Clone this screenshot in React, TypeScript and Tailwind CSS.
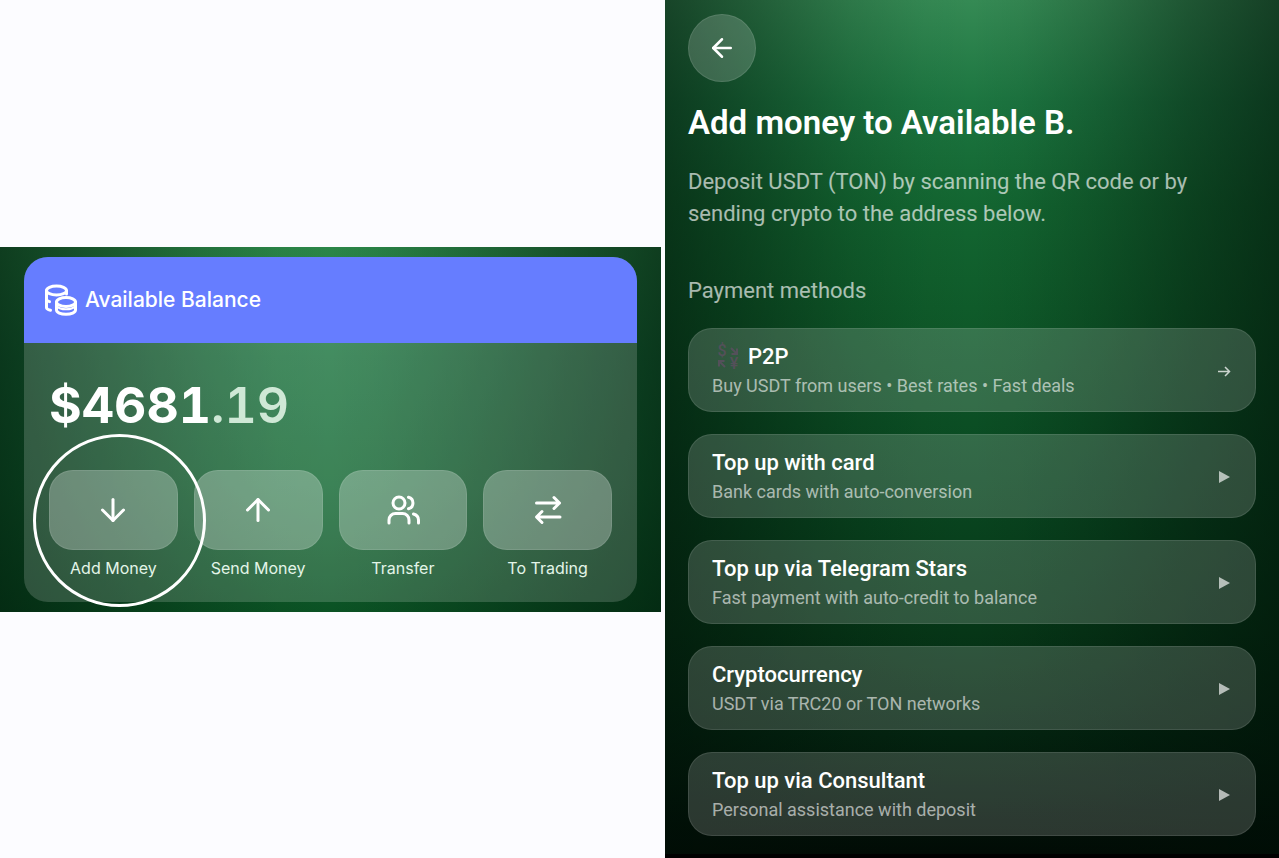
import type { ReactNode } from "react";
import { ArrowDown, ArrowLeft, ArrowUp } from "lucide-react";

interface IPaymentMethod {
  readonly title: string;
  readonly description: string;
  readonly isP2P?: boolean;
}

interface IQuickActionProps {
  readonly label: string;
  readonly children: ReactNode;
}

const PAYMENT_METHODS: IPaymentMethod[] = [
  {
    title: "P2P",
    description: "Buy USDT from users • Best rates • Fast deals",
    isP2P: true,
  },
  { title: "Top up with card", description: "Bank cards with auto-conversion" },
  {
    title: "Top up via Telegram Stars",
    description: "Fast payment with auto-credit to balance",
  },
  { title: "Cryptocurrency", description: "USDT via TRC20 or TON networks" },
  {
    title: "Top up via Consultant",
    description: "Personal assistance with deposit",
  },
];

function CoinsIcon() {
  return (
    <svg
      className="size-8 shrink-0"
      viewBox="0 0 32 32"
      fill="none"
      stroke="currentColor"
      strokeWidth="3"
      strokeLinecap="round"
      strokeLinejoin="round"
      aria-hidden="true"
    >
      <ellipse cx="11.5" cy="6.5" rx="10" ry="4.500" />
      <path d="M1.5 6.5v17c0 1.400 1.500 2.200 4 2.700" />
      <path d="M1.500 15c0 1.500 1.300 2.200 3 2.600M21.500 7v3" />
      <ellipse cx="21" cy="18" rx="9.500" ry="4.500" />
      <path d="M11.500 18v8c0 2.400 4.200 4.300 9.500 4.300s9.500-1.900 9.500-4.300v-8" />
      <path d="M12 22.500c1.600 1.800 5 2.800 9 2.800s7.400-1 9-2.800" strokeWidth="2" />
    </svg>
  );
}

function UsersIcon() {
  return (
    <svg
      className="h-8 w-9"
      viewBox="0 0 36 32"
      fill="none"
      stroke="currentColor"
      strokeWidth="3"
      strokeLinecap="round"
      aria-hidden="true"
    >
      <circle cx="14" cy="9" r="6" />
      <path d="M4 29v-3a6.500 6.500 0 0 1 6.500-6.500h7a6.500 6.500 0 0 1 6.500 6.500v3" />
      <path d="M23.500 3.200a6 6 0 0 1 0 11.600M28.500 20c3 .8 5 3 5 6v3" />
    </svg>
  );
}

function SwapIcon() {
  return (
    <svg
      className="h-8 w-8"
      viewBox="0 0 32 32"
      fill="none"
      stroke="currentColor"
      strokeWidth="3"
      strokeLinecap="round"
      strokeLinejoin="round"
      aria-hidden="true"
    >
      <path d="M4.500 9h23M22 3.500 27.500 9 22 14.500" />
      <path d="M28 23H5M10 17.500 4.500 23l5.500 5.500" />
    </svg>
  );
}

function ExchangeIcon() {
  return (
    <span
      className="grid w-7 grid-cols-2 place-items-center pl-1 text-base leading-[13px] font-medium text-[#54505a]"
      aria-hidden="true"
    >
      <span>$</span>
      <svg className="size-2" viewBox="0 0 8 8" fill="none" stroke="currentColor" strokeWidth="2">
        <path d="m1 1 5 5M7 1.500V7H1.500" />
      </svg>
      <svg className="size-2" viewBox="0 0 8 8" fill="none" stroke="currentColor" strokeWidth="2">
        <path d="M7 7 2 2M1 6.500V1h5.500" />
      </svg>
      <span>¥</span>
    </span>
  );
}

function QuickAction({ label, children }: IQuickActionProps) {
  return (
    <button type="button" className="flex min-w-0 flex-1 flex-col items-center gap-2">
      <span className="flex h-20 w-full items-center justify-center rounded-3xl border border-white/10 bg-white/28 text-white">
        {children}
      </span>
      <span className="text-base leading-5 whitespace-nowrap text-[#e3f5e8]">
        {label}
      </span>
    </button>
  );
}

function BalancePanel() {
  return (
    <section className="w-full bg-[linear-gradient(90deg,rgba(0,24,10,0.66),rgba(0,24,10,0.44)_15%,rgba(0,24,10,0.2)_30%,rgba(0,24,10,0.04)_42%,rgba(0,24,10,0)_50%,rgba(0,24,10,0.06)_57%,rgba(0,24,10,0.24)_70%,rgba(0,24,10,0.46)_85%,rgba(0,24,10,0.66)),linear-gradient(180deg,#2b8648,#1d7540_30%,#156a35_65%,#0b5224)] px-6 pt-[10px] pb-[10px]">
      <div className="relative rounded-3xl bg-white/17">
        <header className="flex h-[86px] items-center gap-2 rounded-t-3xl bg-[#667dff] px-[21px] text-white">
          <CoinsIcon />
          <h2 className="text-[21px] leading-7 font-medium">
            Available Balance
          </h2>
        </header>
        <div className="px-[25px] pt-8 pb-6">
          <p className="text-[50px] leading-[60px] font-bold text-white tabular-nums">
            $4681<span className="font-semibold text-[#cfe8d6]">.19</span>
          </p>
          <div className="flex gap-4 pt-[35px]">
            <QuickAction label="Add Money">
              <ArrowDown size={36} strokeWidth={2} />
            </QuickAction>
            <QuickAction label="Send Money">
              <ArrowUp size={36} strokeWidth={2} />
            </QuickAction>
            <QuickAction label="Transfer">
              <UsersIcon />
            </QuickAction>
            <QuickAction label="To Trading">
              <SwapIcon />
            </QuickAction>
          </div>
        </div>
        {/* highlight ring around the first action */}
        <span className="pointer-events-none absolute top-[177px] left-[9px] size-[173px] rounded-full border-3 border-white" />
      </div>
    </section>
  );
}

function PaymentMethod({ title, description, isP2P }: IPaymentMethod) {
  return (
    <li>
      <button
        type="button"
        className="flex w-full items-center justify-between rounded-3xl border border-white/10 bg-white/17 pt-[13px] pr-6 pb-[11px] pl-[23px] text-left"
      >
        <span className="flex flex-col">
          <span className="flex items-center gap-2 text-[22px] leading-[30px] font-medium text-white">
            {isP2P && <ExchangeIcon />}
            {title}
          </span>
          <span className="text-lg leading-7 text-white/60">
            {description}
          </span>
        </span>
        {isP2P ? (
          <svg
            className="h-3 w-[14px] text-white/75"
            viewBox="0 0 14 12"
            fill="none"
            stroke="currentColor"
            strokeWidth="1.500"
            aria-hidden="true"
          >
            <path d="M1 6.500h11.500M8 2l4.500 4.500L8 11" />
          </svg>
        ) : (
          <svg className="h-3 w-[14px] text-white/65" viewBox="0 0 14 12" aria-hidden="true">
            <path d="M2 0v12l11-6Z" fill="currentColor" />
          </svg>
        )}
      </button>
    </li>
  );
}

function AddMoneyPanel() {
  return (
    <section className="min-w-0 border-b-4 border-black bg-[linear-gradient(90deg,rgba(0,14,6,0.56),rgba(0,14,6,0.36)_15%,rgba(0,14,6,0.15)_30%,rgba(0,14,6,0.03)_42%,rgba(0,14,6,0)_50%,rgba(0,14,6,0.05)_58%,rgba(0,14,6,0.2)_70%,rgba(0,14,6,0.42)_85%,rgba(0,14,6,0.6)),linear-gradient(180deg,#358a54,#1c7540_12%,#136631_24%,#0f5b2a_36%,#094821_56%,#063617_74%,#032410_86%,#010b05)] px-[23px] pt-[14px] pb-[18px] font-['Roboto','Liberation_Sans',sans-serif]">
      <button
        type="button"
        aria-label="Back"
        className="flex size-[68px] items-center justify-center rounded-full border border-white/10 bg-white/18 text-white"
      >
        <ArrowLeft size={30} strokeWidth={2} />
      </button>
      <h1 className="mt-[21px] text-[33px] leading-10 font-semibold text-white">
        Add money to Available B.
      </h1>
      <p className="mt-[23px] text-[22px] leading-8 text-white/65">
        Deposit USDT (TON) by scanning the QR code or by sending crypto to the
        address below.
      </p>
      <h2 className="mt-[45px] text-[22px] leading-8 text-white/65">
        Payment methods
      </h2>
      <ul className="mt-[21px] flex flex-col gap-[22px]">
        {PAYMENT_METHODS.map((method) => (
          <PaymentMethod key={method.title} {...method} />
        ))}
      </ul>
    </section>
  );
}

export default function App() {
  return (
    <main className="grid min-h-screen grid-cols-[661fr_614fr] gap-1 bg-[#fcfcff] font-['Inter','Liberation_Sans',sans-serif]">
      <div className="flex min-w-0 items-center">
        <BalancePanel />
      </div>
      <AddMoneyPanel />
    </main>
  );
}
